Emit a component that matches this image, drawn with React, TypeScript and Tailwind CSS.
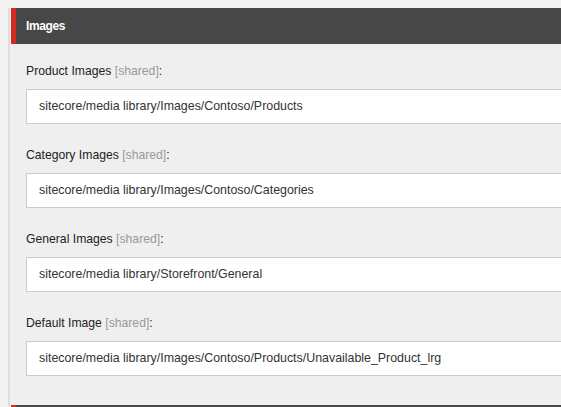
import React from 'react';

type Field = { label: string; value: string };

const fields: Field[] = [
  { label: 'Product Images', value: 'sitecore/media library/Images/Contoso/Products' },
  { label: 'Category Images', value: 'sitecore/media library/Images/Contoso/Categories' },
  { label: 'General Images', value: 'sitecore/media library/Storefront/General' },
  { label: 'Default Image', value: 'sitecore/media library/Images/Contoso/Products/Unavailable_Product_lrg' },
];

const FieldRow = ({ label, value }: Field) => (
  <div className="flex flex-col pb-[24px]">
    <div className="text-[12.2px] leading-[14px] text-[#222] mb-[11px]">
      {label} <span className="text-[#999]">[shared]</span>:
    </div>
    <div className="h-[35px] bg-white border border-[#cccccc] flex items-center pl-[12px] text-[12.4px] text-[#333] whitespace-nowrap">
      {value}
    </div>
  </div>
);

export default function App() {
  return (
    <div
      className="w-[561px] h-[407px] overflow-hidden bg-[#f3f3f3] pl-[8px] pt-[8px]"
      style={{ fontFamily: '"Liberation Sans", Arial, sans-serif' }}
    >
      <div className="border-l-2 border-[#dddddd] pl-[1px] h-full">
        <div className="h-[36px] bg-[#474747] border-l-[5px] border-[#d12b20] flex items-center pl-[10px]">
          <span className="text-white font-bold text-[12px] tracking-[-0.4px]">Images</span>
        </div>
        <div className="bg-[#efefef] pl-[15px] pt-[20px] pb-[5px] -mr-[40px]">
          {fields.map((f) => (
            <FieldRow key={f.label} {...f} />
          ))}
        </div>
        <div className="h-[6px] bg-[#474747] border-l-[5px] border-[#d12b20]" />
      </div>
    </div>
  );
}
